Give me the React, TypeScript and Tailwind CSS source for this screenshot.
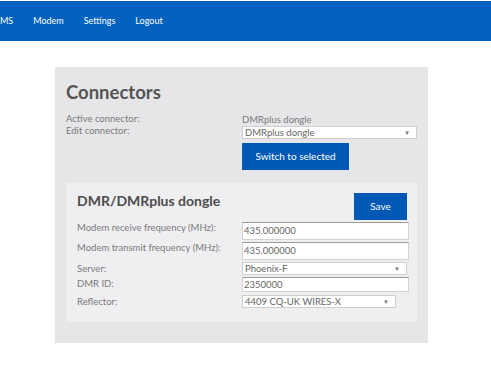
import React from "react";

const navItems = ["MS", "Modem", "Settings", "Logout"];

function Select({ value, className }: { value: string; className: string }) {
  return (
    <div
      className={`flex items-center justify-between border border-[#cfcfd2] bg-white pl-[2px] pr-[6px] text-[9.5px] leading-none text-[#666] ${className}`}
    >
      <span>{value}</span>
      <span className="text-[6px] text-[#777]">▼</span>
    </div>
  );
}

function TextInput({ value, className }: { value: string; className: string }) {
  return (
    <div
      className={`flex items-center border border-[#d2d2d4] border-t-[#9a9a9a] bg-white pl-px text-[9.5px] leading-none text-[#666] ${className}`}
    >
      {value}
    </div>
  );
}

export default function App() {
  return (
    <div
      className="relative h-[377px] w-[491px] overflow-hidden bg-white"
      style={{ fontFamily: "Lato, 'Noto Sans', sans-serif" }}
    >
      <nav className="mt-px flex h-[40px] items-center gap-[20px] bg-[#0361bf] text-[9px] text-white">
        {navItems.map((item) => (
          <span key={item}>{item}</span>
        ))}
      </nav>

      <div className="ml-[55px] mt-[26px] h-[276px] w-[373px] bg-[#e6e5e8] pl-[11px] pt-[14px]">
        <h1 className="text-[18.5px] font-bold leading-[22px] text-[#545454]">Connectors</h1>

        <div className="mt-[10px] grid grid-cols-[176px_1fr] text-[9.5px] leading-[11px] text-[#7a7a7a]">
          <span>Active connector:</span>
          <span className="pt-[1px]">DMRplus dongle</span>
          <span>Edit connector:</span>
          <div className="pt-[1px]">
            <Select value="DMRplus dongle" className="h-[13px] w-[175px]" />
            <button className="mt-[4px] h-[27px] w-[107px] bg-[#0159b5] text-[10px] text-white">
              Switch to selected
            </button>
          </div>
        </div>

        <div className="mt-[13px] h-[139px] w-[351px] bg-[#efeef1] pl-[11px] pr-[10px] pt-[10px]">
          <div className="flex items-start justify-between">
            <h2 className="-mt-px text-[14px] font-bold leading-[18px] text-[#4d4d4d]">
              DMR/DMRplus dongle
            </h2>
            <button className="h-[27px] w-[53px] bg-[#0159b5] text-[10px] text-white">Save</button>
          </div>

          <div className="mt-[2px] grid grid-cols-[165px_1fr] text-[9.5px] text-[#7a7a7a]">
            <span className="leading-[11px]">Modem receive frequency (MHz):</span>
            <TextInput value="435.000000" className="h-[18px] w-[167px]" />
            <span className="mt-[2px] leading-[11px]">Modem transmit frequency (MHz):</span>
            <TextInput value="435.000000" className="mt-[2px] h-[18px] w-[167px]" />
            <span className="mt-[2px] pt-px leading-[11px]">Server:</span>
            <Select value="Phoenix-F" className="mt-[2px] h-[13px] w-[165px]" />
            <span className="mt-[3px] leading-[11px]">DMR ID:</span>
            <TextInput value="2350000" className="mt-[2px] h-[15px] w-[167px]" />
            <span className="mt-[3px] pt-px leading-[11px]">Reflector:</span>
            <Select value="4409 CQ-UK WIRES-X" className="mt-[3px] h-[13px] w-[154px]" />
          </div>
        </div>
      </div>
    </div>
  );
}
